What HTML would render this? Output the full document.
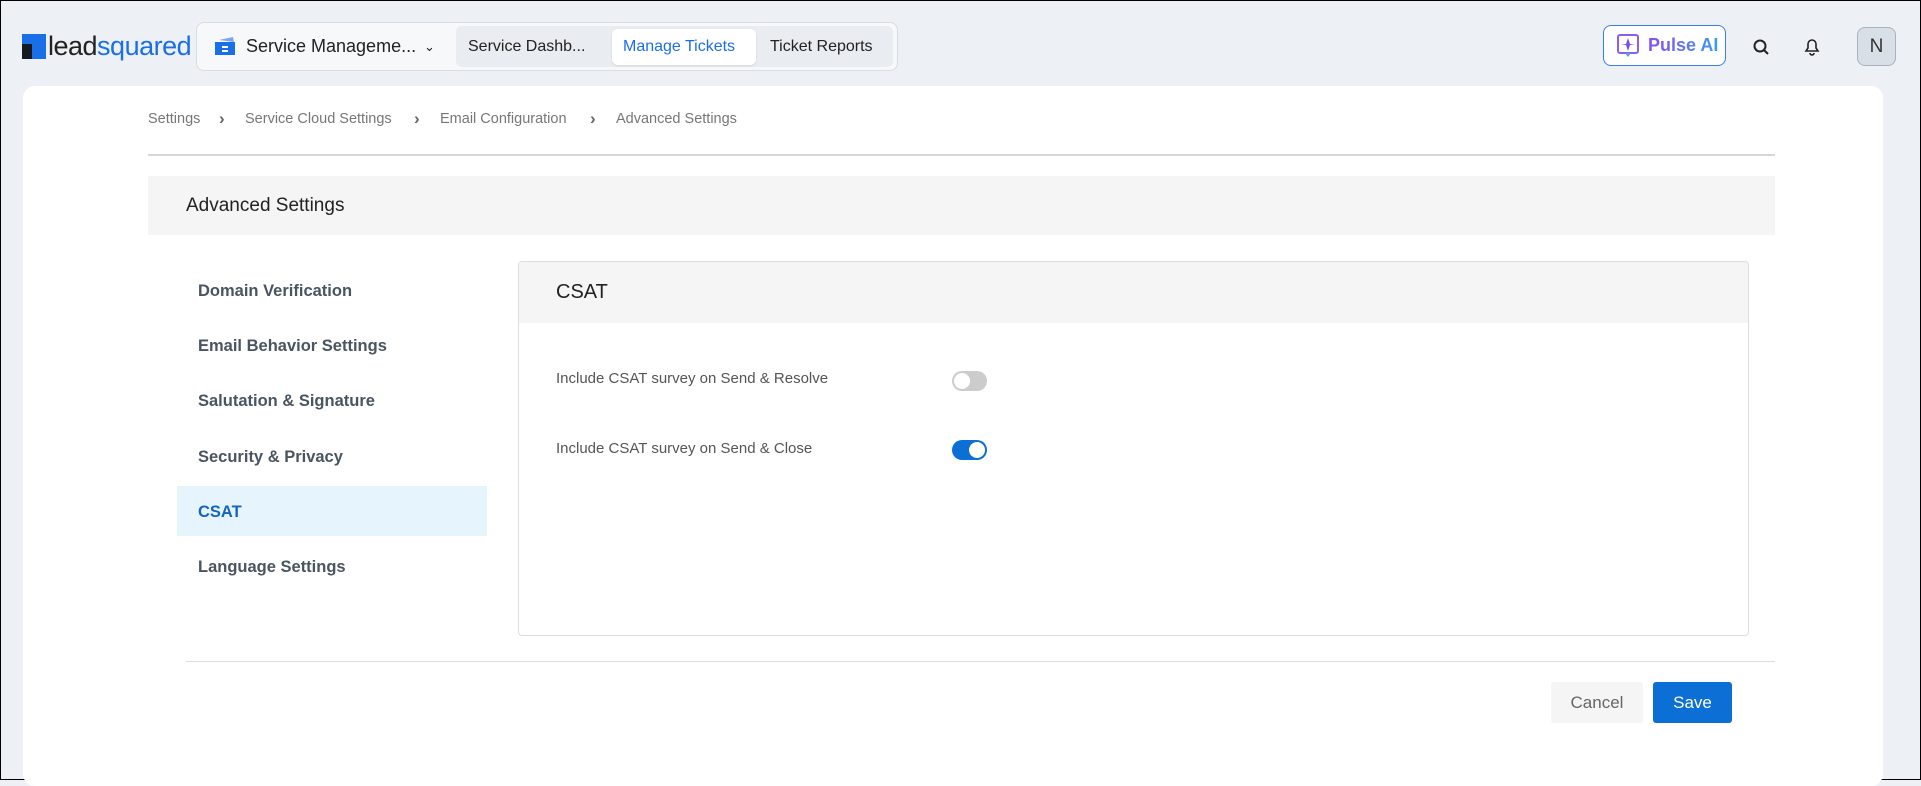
<!DOCTYPE html>
<html><head><meta charset="utf-8"><style>
*{box-sizing:border-box;margin:0;padding:0}
body{width:1921px;height:780px;background:#edf1f5;font-family:"Liberation Sans",sans-serif;position:relative;overflow:hidden;border:1px solid #000}
.a{position:absolute}
.nav{left:195px;top:21px;width:702px;height:49px;border:1px solid #d8dde3;border-radius:8px;background:#f6f8fa}
.tabs{left:455px;top:25px;width:437px;height:41px;background:#e9edf1;border-radius:6px}
.t{position:absolute;top:29px;height:33px;line-height:33px;font-size:16px;color:#222}
.card{left:22px;top:85px;width:1860px;height:700px;background:#fff;border-radius:12px}
.bc{top:110px;font-size:14.5px;color:#777}
.sep{font-weight:bold;font-size:17px;top:108px;color:#666}
.mi{left:197px;font-size:16.5px;font-weight:bold;color:#4a5561}
.tg{width:35px;height:20px;border-radius:10px}
.lbl{left:555px;font-size:15px;color:#555}
</style></head><body>
<svg class="a" style="left:21px;top:33px" width="24" height="25"><rect width="24" height="25" fill="#1a6fe6"/><polygon points="0,10 10,10 10,25 0,25" fill="#16191d"/></svg>
<div class="a" style="left:47px;top:30px;font-size:27px;letter-spacing:-0.5px;color:#222;font-weight:300;-webkit-text-stroke:0">lead<span style="color:#1a6fe6">squared</span></div>
<div class="a nav"></div>
<svg class="a" style="left:212px;top:33px" width="24" height="24"><path d="M2 8h20v13H2z" fill="#1a6fe6"/><path d="M6 6l14-3 1 5z" fill="#7aa8f0"/><rect x="9" y="12" width="6" height="2" fill="#fff"/><rect x="9" y="16" width="6" height="2" fill="#fff"/></svg>
<div class="t" style="left:245px;font-size:18px">Service Manageme...</div>
<div class="t" style="left:423px;font-size:13px">⌄</div>
<div class="a tabs"></div>
<div class="t" style="left:467px">Service Dashb...</div>
<div class="a" style="left:611px;top:28px;width:144px;height:36px;background:#fff;border-radius:6px;box-shadow:0 1px 2px rgba(0,0,0,.1)"></div>
<div class="t" style="left:622px;color:#1a6fe6">Manage Tickets</div>
<div class="t" style="left:769px">Ticket Reports</div>
<div class="a" style="left:1602px;top:24px;width:123px;height:41px;border:1.5px solid #3b7cf0;border-radius:8px;background:#fff"></div>
<svg class="a" style="left:1615px;top:33px" width="24" height="24"><rect x="2" y="1" width="20" height="18" rx="2" fill="none" stroke="#8a5cf0" stroke-width="2"/><path d="M9 19l3 4 3-4" fill="#5b9cf5"/><path d="M12 4l2 6 5 0-5 1-2 6-2-6-5-1 5 0z" fill="#7a4df0"/></svg>
<div class="a" style="left:1647px;top:34px;font-size:18px;font-weight:bold;background:linear-gradient(90deg,#8a4df0,#3b9cf0);-webkit-background-clip:text;color:transparent">Pulse AI</div>
<svg class="a" style="left:1751px;top:37px" width="18" height="18"><circle cx="8" cy="8" r="5.5" fill="none" stroke="#222" stroke-width="2"/><path d="M12 12l4 4" stroke="#222" stroke-width="2"/></svg>
<svg class="a" style="left:1801px;top:35px" width="20" height="20"><path d="M4 15h12l-2-3V8a4 4 0 0 0-8 0v4z M8 17a2 2 0 0 0 4 0" fill="none" stroke="#222" stroke-width="1.6"/></svg>
<div class="a" style="left:1856px;top:26px;width:39px;height:39px;border:1px solid #a9b3bf;border-radius:8px;background:#d8dfe7;text-align:center;line-height:38px;font-size:19px;color:#333">N</div>
<div class="a card"></div>
<div class="a bc" style="left:147px">Settings</div>
<div class="a bc sep" style="left:218px">›</div>
<div class="a bc" style="left:244px">Service Cloud Settings</div>
<div class="a bc sep" style="left:413px">›</div>
<div class="a bc" style="left:439px">Email Configuration</div>
<div class="a bc sep" style="left:589px">›</div>
<div class="a bc" style="left:615px">Advanced Settings</div>
<div class="a" style="left:147px;top:153px;width:1627px;height:2px;background:#d6d6d6"></div>
<div class="a" style="left:147px;top:175px;width:1627px;height:59px;background:#f5f5f5"></div>
<div class="a" style="left:185px;top:194px;font-size:19px;color:#222">Advanced Settings</div>
<div class="a mi" style="top:281px">Domain Verification</div>
<div class="a mi" style="top:336px">Email Behavior Settings</div>
<div class="a mi" style="top:391px">Salutation &amp; Signature</div>
<div class="a mi" style="top:447px">Security &amp; Privacy</div>
<div class="a" style="left:176px;top:485px;width:310px;height:50px;background:#e6f4fe"></div>
<div class="a mi" style="top:502px;color:#1565c0">CSAT</div>
<div class="a mi" style="top:557px">Language Settings</div>
<div class="a" style="left:517px;top:260px;width:1231px;height:375px;border:1px solid #ddd;border-radius:4px;overflow:hidden"><div style="height:61px;background:#f5f5f5"></div></div>
<div class="a" style="left:555px;top:280px;font-size:20px;color:#222">CSAT</div>
<div class="a lbl" style="top:369px">Include CSAT survey on Send &amp; Resolve</div>
<div class="a lbl" style="top:439px">Include CSAT survey on Send &amp; Close</div>
<div class="a tg" style="left:951px;top:370px;background:#ccc"><div style="position:absolute;left:2px;top:2px;width:16px;height:16px;border-radius:50%;background:#fff"></div></div>
<div class="a tg" style="left:951px;top:439px;background:#0b6fd6"><div style="position:absolute;left:17px;top:2px;width:16px;height:16px;border-radius:50%;background:#fff"></div></div>
<div class="a" style="left:185px;top:660px;width:1589px;height:1px;background:#ddd"></div>
<div class="a" style="left:1550px;top:681px;width:92px;height:41px;background:#f5f5f5;border-radius:3px;text-align:center;line-height:41px;font-size:17px;color:#666">Cancel</div>
<div class="a" style="left:1652px;top:681px;width:79px;height:41px;background:#0b6fd6;border-radius:3px;text-align:center;line-height:41px;font-size:17px;color:#fff">Save</div>
</body></html>
